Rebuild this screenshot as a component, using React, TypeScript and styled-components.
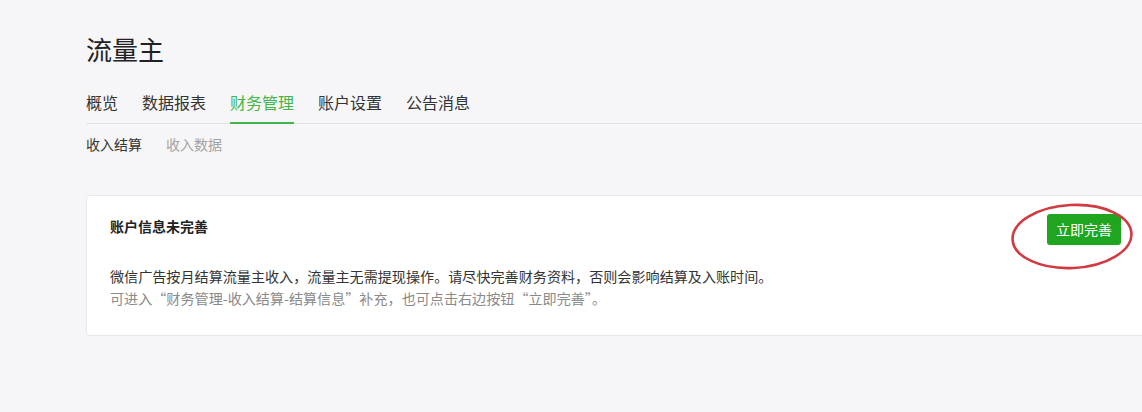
import React from "react";
import styled, { createGlobalStyle } from "styled-components";

const Global = createGlobalStyle`
  html, body {
    margin: 0;
    padding: 0;
    background: #f6f6f8;
  }
  body {
    font-family: "Noto Sans CJK SC", "Noto Sans", sans-serif;
    color: #333;
    overflow: hidden;
  }
`;

const Page = styled.div`
  width: 1142px;
  height: 412px;
  padding: 31px 0 0 86px;
  box-sizing: border-box;
  overflow: hidden;
`;

const Title = styled.h1`
  margin: 0;
  font-size: 26px;
  line-height: 36px;
  font-weight: 400;
  color: #222;
`;

const TabBar = styled.nav`
  display: flex;
  gap: 24px;
  margin-top: 23px;
  border-bottom: 1px solid #e4e4e6;
`;

const Tab = styled.div<{ $active?: boolean }>`
  font-size: 16px;
  line-height: 24px;
  padding-bottom: 8px;
  margin-bottom: -1px;
  color: ${(p) => (p.$active ? "#44b549" : "#333")};
  border-bottom: 2px solid ${(p) => (p.$active ? "#44b549" : "transparent")};
`;

const SubBar = styled.div`
  display: flex;
  gap: 24px;
  margin-top: 10px;
`;

const SubTab = styled.div<{ $active?: boolean }>`
  font-size: 14px;
  line-height: 20px;
  color: ${(p) => (p.$active ? "#333" : "#a3a3a3")};
`;

const Card = styled.section`
  margin-top: 41px;
  margin-right: -12px;
  background: #fff;
  border: 1px solid #e8e8ec;
  border-radius: 4px;
  padding: 18px 32px 26px 23px;
`;

const CardHead = styled.div`
  display: flex;
  justify-content: space-between;
  align-items: flex-start;
`;

const CardTitle = styled.h2`
  margin: 2px 0 0;
  font-size: 14px;
  line-height: 20px;
  font-weight: 700;
  color: #222;
`;

const ButtonWrap = styled.div`
  position: relative;
`;

const Button = styled.button`
  display: block;
  width: 74px;
  height: 31px;
  padding: 0;
  border: none;
  border-radius: 3px;
  background: #1fa51f;
  color: #fff;
  font-family: "Noto Sans CJK SC", sans-serif;
  font-size: 14px;
  line-height: 31px;
  cursor: pointer;
`;

const Circle = styled.svg`
  position: absolute;
  left: -36px;
  top: -11px;
  width: 122px;
  height: 67px;
  pointer-events: none;
  overflow: visible;
`;

const Body = styled.div`
  margin-top: 20px;
  font-size: 14.1px;
  line-height: 22px;
`;

const Line = styled.p<{ $muted?: boolean }>`
  margin: 0;
  color: ${(p) => (p.$muted ? "#8a8a8a" : "#333")};
`;

export default function App() {
  return (
    <Page>
      <Global />
      <Title>流量主</Title>
      <TabBar>
        <Tab>概览</Tab>
        <Tab>数据报表</Tab>
        <Tab $active>财务管理</Tab>
        <Tab>账户设置</Tab>
        <Tab>公告消息</Tab>
      </TabBar>
      <SubBar>
        <SubTab $active>收入结算</SubTab>
        <SubTab>收入数据</SubTab>
      </SubBar>
      <Card>
        <CardHead>
          <CardTitle>账户信息未完善</CardTitle>
          <ButtonWrap>
            <Button>立即完善</Button>
            <Circle viewBox="0 0 122 67">
              <ellipse
                cx="61"
                cy="33.5"
                rx="59.5"
                ry="31.5"
                fill="none"
                stroke="#d23a42"
                strokeWidth="2.6"
                transform="rotate(-3 61 33.5)"
              />
            </Circle>
          </ButtonWrap>
        </CardHead>
        <Body>
          <Line>
            微信广告按月结算流量主收入，流量主无需提现操作。请尽快完善财务资料，否则会影响结算及入账时间。
          </Line>
          <Line $muted>
            可进入“财务管理-收入结算-结算信息”补充，也可点击右边按钮“立即完善”。
          </Line>
        </Body>
      </Card>
    </Page>
  );
}
